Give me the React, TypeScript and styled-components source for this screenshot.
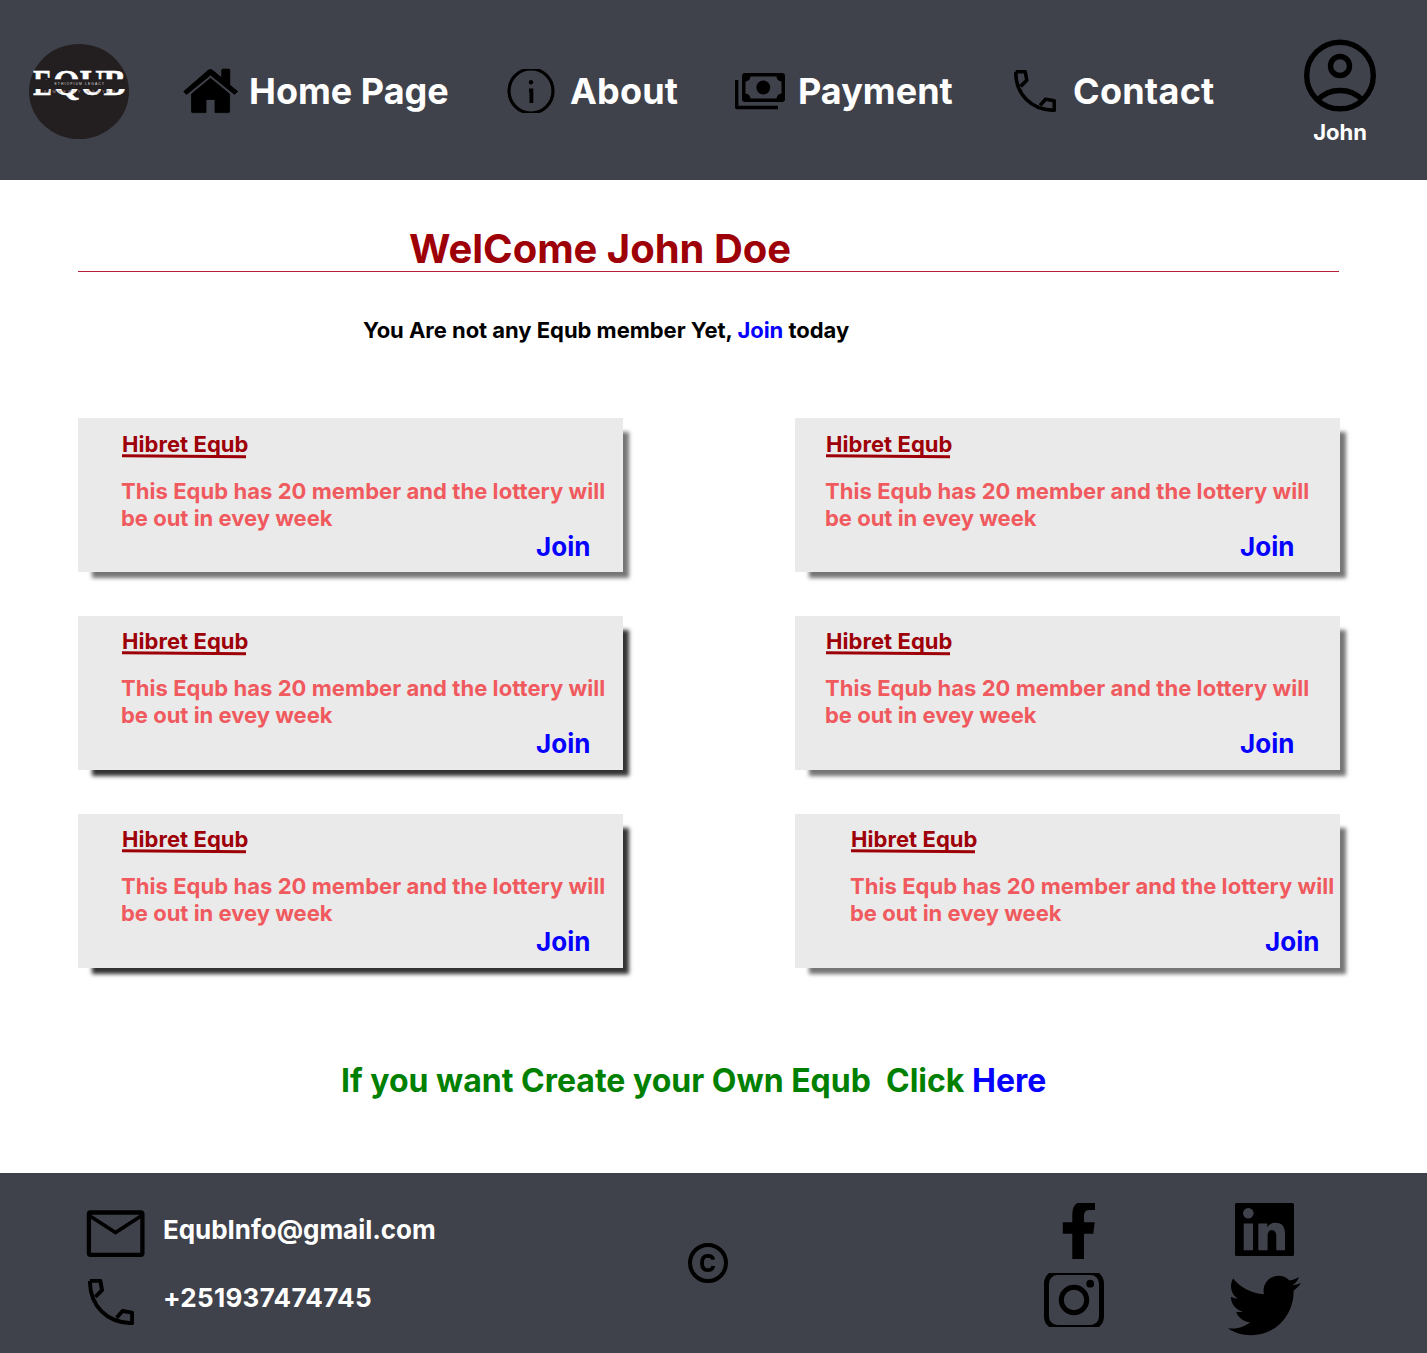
import React from 'react';
import styled, { createGlobalStyle } from 'styled-components';
import { FaTwitter } from 'react-icons/fa';

const Global = createGlobalStyle`
  * { box-sizing: border-box; }
  body { margin: 0; background: #fff; font-family: Inter, sans-serif; font-weight: 700; }
  svg { display: block; flex: none; }
  a { color: inherit; text-decoration: none; }
  h1, h2, p { margin: 0; font-weight: 700; }
`;

const Page = styled.div`
  width: 1427px;
  height: 1353px;
  display: flex;
  flex-direction: column;
`;

const Header = styled.header`
  height: 180px;
  background: #40424b;
  display: flex;
  align-items: flex-start;
  padding-left: 29px;
`;

const Logo = styled.div`
  margin-top: 44px;
  width: 100px;
`;

const NavItem = styled.a<{ $left: number; $gap: number; $width: number; $tracking?: number }>`
  display: flex;
  align-items: center;
  height: 182px;
  margin-left: ${(p) => p.$left}px;
  gap: ${(p) => p.$gap}px;
  width: ${(p) => p.$width}px;
  color: #fff;
  font-size: 36px;
  line-height: 44px;
  letter-spacing: ${(p) => p.$tracking ?? 0}px;
  white-space: nowrap;
`;

const User = styled.div`
  display: flex;
  flex-direction: column;
  align-items: center;
  margin: 39px 0 0 88px;
  width: 74px;
  color: #fff;
  font-size: 22px;
  line-height: 27px;
  gap: 6px;
`;

const Main = styled.main`
  height: 993px;
  padding: 45px 87px 0 78px;
`;

const Welcome = styled.h1`
  height: 47px;
  width: 1261px;
  padding-left: 331px;
  border-bottom: 1px solid #b81d3a;
  color: #9e0008;
  font-size: 40px;
  line-height: 48px;
  letter-spacing: -0.03px;
`;

const Notice = styled.p`
  margin: 45px 0 74px 285px;
  font-size: 22px;
  line-height: 27px;
  letter-spacing: -0.03px;
  color: #000;
`;

const Link = styled.a`
  color: #0500ff;
`;

const Grid = styled.section`
  display: grid;
  grid-template-columns: 545px 545px;
  column-gap: 172px;
  row-gap: 44px;
`;

const Card = styled.article<{ $inset: number; $top: number; $dark?: boolean }>`
  height: 154px;
  background: #eaeaea;
  box-shadow: ${(p) => (p.$dark ? '#333' : '#757575')} 10px 10px 4px -4px;
  padding: ${(p) => p.$top}px 0 0 ${(p) => p.$inset}px;
  display: flex;
  flex-direction: column;
  align-items: flex-start;
`;

const CardTitle = styled.h2`
  color: #9e0008;
  font-size: 22px;
  line-height: 27px;
  letter-spacing: 0.06px;
  margin-left: 1px;
`;

const Rule = styled.svg`
  margin: -4px 0 0 1px;
`;

const CardText = styled.p`
  margin-top: 19px;
  width: 500px;
  color: #f05a5e;
  font-size: 22px;
  line-height: 27px;
  white-space: pre-line;
`;

const FirstLine = styled.span`
  letter-spacing: 0.055px;
`;

const JoinLink = styled(Link)`
  margin: -1px 0 0 415px;
  font-size: 26px;
  line-height: 31px;
`;

const Create = styled.p`
  margin: 93px 0 0 263px;
  color: #008000;
  font-size: 32px;
  line-height: 39px;
  white-space: pre;
`;

const Footer = styled.footer`
  height: 180px;
  background: #40424b;
  display: flex;
  align-items: flex-start;
  color: #fff;
`;

const Contacts = styled.div`
  width: 688px;
  padding: 36px 0 0 86px;
  display: flex;
  flex-direction: column;
  gap: 20px;
`;

const ContactRow = styled.div`
  display: grid;
  grid-template-columns: 77px auto;
  align-items: start;
  height: 48px;
  font-size: 26px;
  line-height: 31px;
`;

const ContactLabel = styled.span<{ $tracking: number }>`
  margin-top: 5px;
  letter-spacing: ${(p) => p.$tracking}px;
`;

const Copyright = styled.div`
  width: 356px;
  padding-top: 70px;
`;

const Socials = styled.div`
  display: grid;
  grid-template-columns: 184px 74px;
  grid-template-rows: 70px 66px;
  padding-top: 30px;
`;

const SocialCell = styled.a<{ $x?: number; $y?: number }>`
  margin: ${(p) => p.$y ?? 0}px 0 0 ${(p) => p.$x ?? 0}px;
`;

const EqubLogo = () => (
  <svg width="100" height="95" viewBox="29 44 100 95">
    <ellipse cx="79" cy="91.500" rx="50" ry="47.500" fill="#231f20" />
    <g fontFamily="Liberation Serif, serif" fontWeight="700" fontSize="36.500" fill="#fff" stroke="#fff" strokeWidth=".4">
      <text x="33" y="95.300" textLength="19" lengthAdjust="spacingAndGlyphs">E</text>
      <text x="53" y="95.300" textLength="27" lengthAdjust="spacingAndGlyphs">Q</text>
      <text x="79.500" y="95.300" textLength="25" lengthAdjust="spacingAndGlyphs">U</text>
      <text x="103.500" y="95.300" textLength="22" lengthAdjust="spacingAndGlyphs">B</text>
    </g>
    <rect x="32" y="79.300" width="94" height="9.700" fill="#231f20" />
    <text x="54.500" y="85" fontFamily="Liberation Sans, sans-serif" fontWeight="400" fontSize="3.400" fill="#ddd" textLength="49.500">ETHIOPIUM LEGACY</text>
    <text x="44" y="92.800" fontFamily="Liberation Sans, sans-serif" fontWeight="400" fontSize="4" fill="#a58d88" textLength="71">KIMBERLY NGUYEN</text>
  </svg>
);

const HomeIcon = () => (
  <svg width="56" height="46" viewBox="183 68 56 46" fill="#000" stroke="#000" strokeLinejoin="round">
    <path d="M183.700 91.600 L208.300 70.300 Q210.500 68.700 212.500 70.300 L221.800 78 V70 Q221.800 69.200 222.600 69.200 H229 Q229.700 69.200 229.700 70 V85 L237.600 91.500 L234.500 94.300 L210.500 75 L186.700 94.300 Z" strokeWidth="1" />
    <path d="M191.500 94 L210.500 78.300 L229.600 94 V111.500 Q229.600 112.600 228.500 112.600 H215 V99.500 H206 V112.600 H192.600 Q191.500 112.600 191.500 111.500 Z" strokeWidth=".8" />
  </svg>
);

const InfoIcon = () => (
  <svg width="48" height="44" viewBox="507 69 48 44" fill="none" stroke="#000">
    <circle cx="531" cy="91" r="22" strokeWidth="3.200" />
    <circle cx="531" cy="82.300" r="2.200" fill="#000" stroke="none" />
    <path d="M529 90.500 H531.400 V103" strokeWidth="3.800" />
  </svg>
);

const CashIcon = () => (
  <svg width="50" height="38" viewBox="735 72 50 38">
    <path d="M736.700 80 V107.500 H778" fill="none" stroke="#000" strokeWidth="3.400" strokeLinejoin="round" />
    <path fillRule="evenodd" d="M745 73 H782 Q785 73 785 76 V99 Q785 102 782 102 H745 Q742 102 742 99 V76 Q742 73 745 73 Z M750.500 76.500 Q750 81 745.500 81.500 V93.500 Q750 94 750.500 98.500 H776.500 Q777 94 781.500 93.500 V81.500 Q777 81 776.500 76.500 Z" />
    <circle cx="763.300" cy="87.500" r="6.900" />
  </svg>
);

const PhoneIcon = ({ size }: { size: number }) => (
  <svg width={size} height={size} viewBox="0 0 41 41" fill="none" stroke="#000" strokeWidth="3.500" strokeLinejoin="round">
    <path d="M1.700 1.700 H11 L12.500 10 L6.500 16 M1.700 1.700 C1.700 24 17 39.300 39.300 39.300 V30 L30.800 28.500 L25.500 34.500" />
  </svg>
);

const UserIcon = () => (
  <svg width="74" height="74" viewBox="0 0 74 74" fill="none" stroke="#000" strokeWidth="5.400">
    <circle cx="37" cy="36.500" r="33.300" />
    <circle cx="37" cy="27" r="9.500" />
    <path d="M15 60.500 Q24 51.500 37 51.500 T59 60.500" />
  </svg>
);

const MailIcon = () => (
  <svg width="59" height="49" viewBox="86 1209 59 49" fill="none" stroke="#000">
    <rect x="88.900" y="1212.500" width="53.500" height="42.300" rx="1.500" strokeWidth="4.300" />
    <path d="M90 1216 L115.500 1232.500 L141 1216" strokeWidth="3.600" />
  </svg>
);

const CopyrightIcon = () => (
  <svg width="40" height="40" viewBox="0 0 40 40" fill="none" stroke="#000">
    <circle cx="20" cy="20" r="18" strokeWidth="4" />
    <path d="M25.300 16.600 Q24.500 12.800 19.700 12.800 Q14 12.800 14 20 Q14 27.200 19.700 27.200 Q24.500 27.200 25.300 23" strokeWidth="3.800" />
  </svg>
);

const FacebookIcon = () => (
  <svg width="33" height="56" viewBox="1062 1203 33 56">
    <path d="M1072.300 1259 V1233.700 H1062.800 V1222.300 H1072.300 V1214 Q1072.300 1206 1077.300 1203 H1095 V1210 H1089.500 Q1084 1210 1084 1215.500 V1222.300 H1094.700 L1093.300 1233.700 H1084 V1259 Z" />
  </svg>
);

const LinkedinIcon = () => (
  <svg width="59" height="53" viewBox="1235 1203 59 53">
    <rect x="1235" y="1203" width="59" height="53" rx="1.500" />
    <g fill="#40424b">
      <circle cx="1248.300" cy="1213.300" r="5.300" />
      <path d="M1243.700 1223.500 H1253 V1250.300 H1243.700 Z M1258.300 1223.500 H1267.300 V1227 Q1270 1222.800 1275.500 1222.800 Q1285 1222.800 1285 1234 V1250.300 H1276.300 V1236.500 Q1276.300 1230 1271.800 1230 Q1267.600 1230 1267.600 1236.500 V1250.300 H1258.300 Z" />
    </g>
  </svg>
);

const InstagramIcon = () => (
  <svg width="60" height="54" viewBox="1044 1273 60 54" fill="none" stroke="#000">
    <rect x="1046.500" y="1272.500" width="55" height="55" rx="11" strokeWidth="5" />
    <circle cx="1074" cy="1300" r="12.700" strokeWidth="5" />
    <circle cx="1090.200" cy="1283.700" r="3.900" fill="#000" stroke="none" />
  </svg>
);

const cards = [
  { inset: 43, top: 13, dark: false },
  { inset: 30, top: 13, dark: false },
  { inset: 43, top: 12, dark: true },
  { inset: 30, top: 12, dark: false },
  { inset: 43, top: 12, dark: true },
  { inset: 55, top: 12, dark: false },
];

export default function App() {
  return (
    <>
      <Global />
      <Page>
        <Header>
          <Logo><EqubLogo /></Logo>
          <NavItem $left={54} $gap={10} $width={324}><HomeIcon />Home Page</NavItem>
          <NavItem $left={0} $gap={15} $width={228} $tracking={0.2}><InfoIcon />About</NavItem>
          <NavItem $left={0} $gap={13} $width={279}><CashIcon />Payment</NavItem>
          <NavItem $left={0} $gap={17} $width={201} $tracking={0.25}><PhoneIcon size={42} />Contact</NavItem>
          <User><UserIcon />John</User>
        </Header>
        <Main>
          <Welcome>WelCome John Doe</Welcome>
          <Notice>You Are not any Equb member Yet, <Link>Join</Link> today</Notice>
          <Grid>
            {cards.map((card, i) => (
              <Card key={i} $inset={card.inset} $top={card.top} $dark={card.dark}>
                <CardTitle>Hibret Equb</CardTitle>
                <Rule width="124" height="5" viewBox="0 0 124 5">
                  <path d="M0 1.800 L124 2.700" stroke="#9e0008" strokeWidth="3" />
                </Rule>
                <CardText>
                  <FirstLine>This Equb has 20 member and the lottery will</FirstLine>
                  <br />
                  be out in evey week
                </CardText>
                <JoinLink>Join</JoinLink>
              </Card>
            ))}
          </Grid>
          <Create>If you want Create your Own Equb  Click <Link>Here</Link></Create>
        </Main>
        <Footer>
          <Contacts>
            <ContactRow>
              <MailIcon />
              <ContactLabel $tracking={-0.04}>EqubInfo@gmail.com</ContactLabel>
            </ContactRow>
            <ContactRow>
              <SocialCell $x={2} $y={2}><PhoneIcon size={46} /></SocialCell>
              <ContactLabel $tracking={0.28}>+251937474745</ContactLabel>
            </ContactRow>
          </Contacts>
          <Copyright><CopyrightIcon /></Copyright>
          <Socials>
            <SocialCell $x={18}><FacebookIcon /></SocialCell>
            <SocialCell $x={7}><LinkedinIcon /></SocialCell>
            <SocialCell><InstagramIcon /></SocialCell>
            <SocialCell $y={-4}><FaTwitter color="#000" size={73} /></SocialCell>
          </Socials>
        </Footer>
      </Page>
    </>
  );
}
